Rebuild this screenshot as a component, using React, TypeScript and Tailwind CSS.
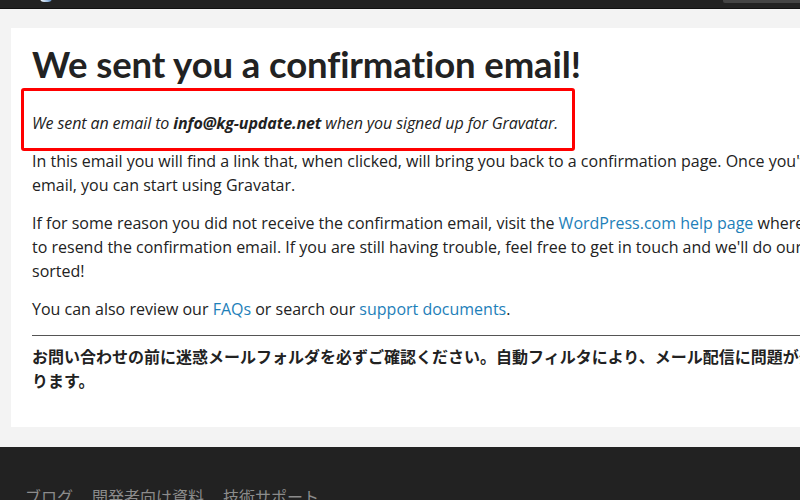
const body = "font-['Open_Sans','Liberation_Sans',sans-serif]";

export default function App() {
  return (
    <div className="w-[800px] h-[500px] overflow-hidden bg-[#f3f3f3] flex flex-col">
      <header className="h-[9px] shrink-0 bg-[#222] border-b border-[#111] flex items-start justify-between">
        <div className="ml-[40px] mt-[-6px] w-[12px] h-[8px] rounded-full bg-gradient-to-r from-white to-[#5b8fc7]" />
        <div className="w-[77px] h-[3px] bg-[#444] rounded-bl-[2px]" />
      </header>

      <main className="pt-[19px] pl-[11px] shrink-0">
        <div className={`w-[900px] h-[399px] bg-white pl-[21px] pt-[12px] text-[#222] ${body}`}>
          <h1 className="font-['Lato','Open_Sans',sans-serif] font-bold text-[36.5px] leading-[48px] tracking-[-0.1px] whitespace-nowrap">
            We sent you a confirmation email!
          </h1>

          <div className="ml-[-11px] mt-[0px] w-[554px] h-[63px] border-[3px] border-[#f00] rounded-[3px] flex items-center pl-[8px] pt-[7px]">
            <p className="italic text-[16px] leading-[24px] tracking-[-0.1px] whitespace-nowrap">
              We sent an email to <b>info@kg-update.net</b> when you signed up for Gravatar.
            </p>
          </div>

          <div className="mt-[-2px] text-[16px] leading-[24px] whitespace-nowrap flex flex-col gap-[14px]">
            <p>
              In this email you will find a link that, when clicked, will bring you back to a confirmation page. Once you've confirmed your
              <br />
              email, you can start using Gravatar.
            </p>
            <p>
              If for some reason you did not receive the confirmation email, visit the{" "}
              <a href="#" className="text-[#1e80b9]">WordPress.com help page</a> where you'll find instructions on how
              <br />
              to resend the confirmation email. If you are still having trouble, feel free to get in touch and we'll do our best to get you
              <br />
              sorted!
            </p>
            <p>
              You can also review our <a href="#" className="text-[#1e80b9]">FAQs</a> or search our{" "}
              <a href="#" className="text-[#1e80b9]">support documents</a>.
            </p>
          </div>

          <hr className="mt-[14px] border-0 border-t border-[#555]" />

          <p className="mt-[8px] font-['Noto_Sans_CJK_JP',sans-serif] font-bold text-[16px] leading-[24px] whitespace-nowrap">
            お問い合わせの前に迷惑メールフォルダを必ずご確認ください。自動フィルタにより、メール配信に問題が発生する場合があ
            <br />
            ります。
          </p>
        </div>
      </main>

      <footer className="mt-[20px] flex-1 bg-[#222] pl-[25px] pt-[37px]">
        <nav className="flex gap-[19px] font-['Noto_Sans_CJK_JP',sans-serif] text-[16px] leading-[24px] text-[#8c8c8c] whitespace-nowrap">
          <a href="#">ブログ</a>
          <a href="#">開発者向け資料</a>
          <a href="#">技術サポート</a>
        </nav>
      </footer>
    </div>
  );
}
